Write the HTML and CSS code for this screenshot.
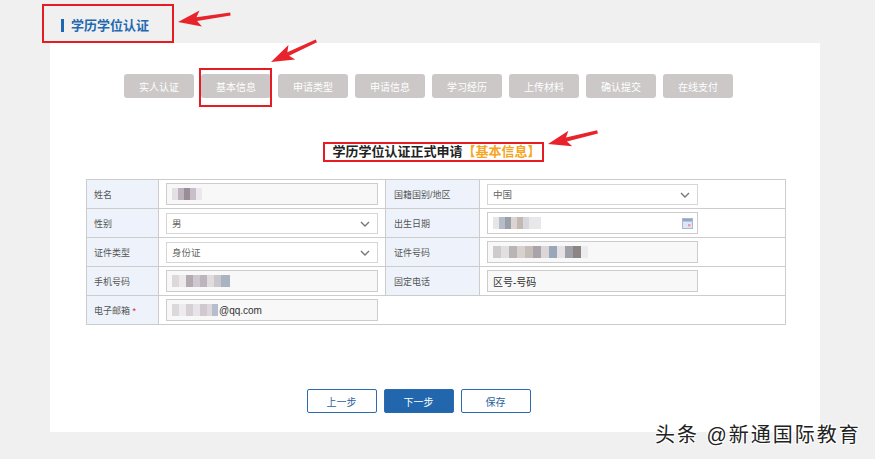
FILE: index.html
```html
<!DOCTYPE html>
<html lang="zh-CN">
<head>
    <meta charset="UTF-8">
    <title>学历学位认证</title>
    <link rel="stylesheet" href="styles.css">
</head>
<body>
<div class="page">
    <div class="crumb">
        <span class="crumb-title">学历学位认证</span>
    </div>

    <main class="panel">
        <div class="steps">
            <span class="step">实人认证</span>
            <span class="step step-marked">基本信息</span>
            <span class="step">申请类型</span>
            <span class="step">申请信息</span>
            <span class="step">学习经历</span>
            <span class="step">上传材料</span>
            <span class="step">确认提交</span>
            <span class="step">在线支付</span>
        </div>

        <h2 class="form-title">
            <span class="title-box">学历学位认证正式申请<em>【基本信息】</em></span>
        </h2>

        <table class="info-table">
            <colgroup>
                <col class="c1"><col class="c2"><col class="c3"><col class="c4">
            </colgroup>
            <tr>
                <td class="label">姓名</td>
                <td><div class="field readonly"><span class="mosaic m-name"></span></div></td>
                <td class="label label-r">国籍国别/地区</td>
                <td>
                    <div class="field field-r select">中国
                        <svg class="chevron" width="10" height="6" viewBox="0 0 10 6"><polyline points="1,1 5,5 9,1" fill="none" stroke="#777" stroke-width="1.4"/></svg>
                    </div>
                </td>
            </tr>
            <tr>
                <td class="label">性别</td>
                <td>
                    <div class="field select">男
                        <svg class="chevron" width="10" height="6" viewBox="0 0 10 6"><polyline points="1,1 5,5 9,1" fill="none" stroke="#777" stroke-width="1.4"/></svg>
                    </div>
                </td>
                <td class="label label-r">出生日期</td>
                <td>
                    <div class="field field-r date"><span class="mosaic m-birth"></span>
                        <svg class="calendar" width="11" height="11" viewBox="0 0 11 11">
                            <rect x="0.5" y="0.5" width="10" height="10" fill="#dfe6f2" stroke="#a9b9d4"/>
                            <rect x="1" y="1" width="9" height="2.5" fill="#8fa6cf"/>
                            <rect x="6" y="6" width="2.5" height="2.5" fill="#e6a0a8"/>
                        </svg>
                    </div>
                </td>
            </tr>
            <tr>
                <td class="label">证件类型</td>
                <td>
                    <div class="field select">身份证
                        <svg class="chevron" width="10" height="6" viewBox="0 0 10 6"><polyline points="1,1 5,5 9,1" fill="none" stroke="#777" stroke-width="1.4"/></svg>
                    </div>
                </td>
                <td class="label label-r">证件号码</td>
                <td><div class="field field-r readonly"><span class="mosaic m-id"></span></div></td>
            </tr>
            <tr>
                <td class="label">手机号码</td>
                <td><div class="field readonly"><span class="mosaic m-phone"></span></div></td>
                <td class="label label-r">固定电话</td>
                <td><div class="field field-r readonly dark">区号-号码</div></td>
            </tr>
            <tr>
                <td class="label">电子邮箱 <i class="req">*</i></td>
                <td colspan="3"><div class="field readonly dark"><span class="mosaic m-mail"></span>@qq.com</div></td>
            </tr>
        </table>

        <div class="actions">
            <button class="btn">上一步</button>
            <button class="btn btn-primary">下一步</button>
            <button class="btn">保存</button>
        </div>
    </main>

    <!-- annotation arrows drawn over the screenshot -->
    <svg class="marks" width="875" height="459" viewBox="0 0 875 459">
        <g fill="#e8232b">
            <polygon transform="translate(178,22) rotate(-8.7)" points="0,0 23,-8 19,-2 53,-1.6 53,1.6 19,2 23,8"/>
            <polygon transform="translate(271,62) rotate(-25)" points="0,0 23,-8 19,-2 50,-1.6 50,1.6 19,2 23,8"/>
            <polygon transform="translate(548,144) rotate(-13.8)" points="0,0 23,-8 19,-2 51,-1.6 51,1.6 19,2 23,8"/>
        </g>
    </svg>

    <div class="watermark">头条 @新通国际教育</div>
</div>
</body>
</html>
```

FILE: styles.css
```css
body {
    margin: 0;
    background-color: #f0f0f0;
    font-family: "Liberation Sans", "Noto Sans CJK SC", sans-serif;
    color: #333;
}

.page {
    position: relative;
    width: 875px;
    height: 459px;
    overflow: hidden;
}

.crumb {
    margin: 4px 0 0 42px;
    width: 132px;
    height: 39px;
    box-sizing: border-box;
    border: 2px solid #e51c23;
    display: flex;
    align-items: center;
    padding: 3px 0 0 17px;
}

.crumb-title {
    border-left: 3px solid #1f67b1;
    padding-left: 7px;
    line-height: 13px;
    font-size: 13px;
    font-weight: bold;
    color: #2468b0;
}

.panel {
    margin-left: 50px;
    width: 770px;
    height: 389px;
    box-sizing: border-box;
    background-color: #fff;
    padding: 31px 35px 0 36px;
}

.steps {
    display: flex;
    justify-content: center;
    gap: 7px;
    padding-right: 14px;
}

.step {
    width: 70px;
    height: 24px;
    border-radius: 3px;
    background-color: #ccc8c8;
    color: #fff;
    font-size: 10px;
    display: flex;
    align-items: center;
    justify-content: center;
}

.step-marked {
    position: relative;
}

.step-marked::after {
    content: "";
    position: absolute;
    left: -2px;
    right: -1px;
    top: -6px;
    bottom: -9px;
    border: 2px solid #e51c23;
}

.form-title {
    margin: 44px 0 17px;
    text-align: center;
    font-size: 13px;
    line-height: 16px;
    color: #222;
}

.title-box {
    display: inline-block;
    border: 2px solid #e51c23;
    padding: 0 1px 0 7px;
    margin-right: 4px;
}

.title-box em {
    font-style: normal;
    color: #f5a623;
}

.info-table {
    width: 699px;
    border-collapse: collapse;
    table-layout: fixed;
}

.info-table .c1 { width: 72px; }
.info-table .c2 { width: 227px; }
.info-table .c3 { width: 94px; }
.info-table .c4 { width: 306px; }

.info-table td {
    border: 1px solid #ccc;
    height: 28px;
    padding: 0 7px;
    font-size: 9px;
    color: #555;
}

.info-table .label {
    background-color: #eef3fb;
}

.info-table .label-r {
    padding-left: 8px;
}

.req {
    font-style: normal;
    color: #e02020;
}

.field {
    position: relative;
    width: 212px;
    height: 22px;
    box-sizing: border-box;
    border: 1px solid #ccc;
    background-color: #fff;
    padding: 0 5px;
    display: flex;
    align-items: center;
    font-size: 9.5px;
    color: #666;
}

.field-r {
    width: 211px;
}

.readonly {
    background-color: #f8f8f8;
}

.dark {
    color: #333;
    font-size: 10px;
}

.select {
    height: 21px;
    border-color: #d6d6d6;
}

.chevron {
    position: absolute;
    right: 7px;
    top: 7px;
}

.calendar {
    position: absolute;
    right: 4px;
    top: 5px;
}

.mosaic {
    display: inline-block;
    height: 12px;
}

.m-name {
    width: 30px;
    background: linear-gradient(90deg, #e4e0e6 0 6px, #bdb3bc 6px 12px, #9a8d97 12px 18px, #c7c0ca 18px 24px, #ebe7ec 24px);
}

.m-birth {
    width: 48px;
    background: linear-gradient(90deg, #e6e6ea 0 6px, #b8bcc6 6px 12px, #9aa0aa 12px 18px, #dcd4d0 18px 24px, #c3b9b4 24px 30px, #d8d8dc 30px 36px, #e8e8ea 36px);
}

.m-id {
    width: 95px;
    background: linear-gradient(90deg, #cfcacd 0 8px, #e2dfe0 8px 16px, #b9b4b6 16px 24px, #d8d2ce 24px 32px, #c4bdb8 32px 40px, #a9a4aa 40px 48px, #dcd6d8 48px 56px, #9aa7b8 56px 64px, #e4e2e4 64px 72px, #a0a0a8 72px 80px, #8d8584 80px 88px, #ececee 88px);
}

.m-phone {
    width: 58px;
    background: linear-gradient(90deg, #dcd8dc 0 7px, #ece9ea 7px 14px, #b3aab2 14px 21px, #cfc8ce 21px 28px, #bdb5bd 28px 35px, #e0dcde 35px 42px, #c9c6cc 42px 49px, #aab4c0 49px);
}

.m-mail {
    width: 46px;
    margin-right: 1px;
    background: linear-gradient(90deg, #dcd8dc 0 7px, #eeebec 7px 14px, #d6d0d4 14px 21px, #e6e4e8 21px 28px, #d0cad0 28px 35px, #dcd8dc 35px 40px, #b4bece 40px);
}

.actions {
    display: flex;
    justify-content: center;
    gap: 7px;
    margin-top: 64px;
    padding-right: 34px;
}

.btn {
    width: 70px;
    height: 24px;
    border: 1px solid #2b6cb0;
    border-radius: 2px;
    background-color: #fff;
    color: #2b5fa0;
    font-family: inherit;
    font-size: 10px;
    cursor: pointer;
}

.btn-primary {
    background-color: #2266ad;
    color: #fff;
}

.marks {
    position: absolute;
    left: 0;
    top: 0;
    pointer-events: none;
}

.watermark {
    position: absolute;
    left: 655px;
    top: 419px;
    font-size: 20px;
    letter-spacing: 2px;
    color: #222;
    text-shadow: 1px 1px 0 #fff, -1px -1px 0 #fff, 1px -1px 0 #fff, -1px 1px 0 #fff;
    white-space: nowrap;
}
```
